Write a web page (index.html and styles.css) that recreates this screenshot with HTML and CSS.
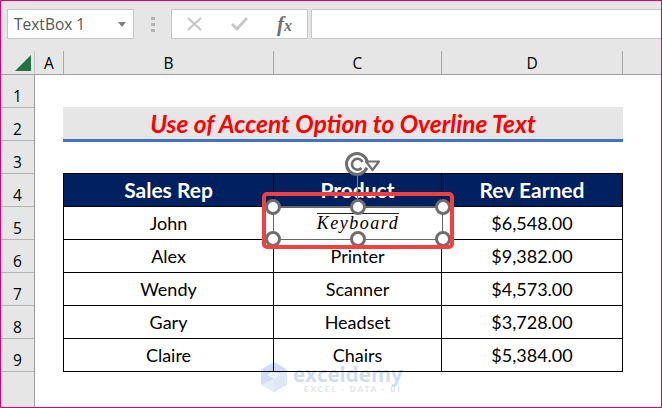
FILE: index.html
```html
<!DOCTYPE html>
<html lang="en">
<head>
  <meta charset="UTF-8" />
  <title>Use of Accent Option to Overline Text</title>
  <link rel="stylesheet" href="styles.css">
</head>
<body>
  <div class="window">

    <!-- Formula bar -->
    <div class="toolbar">
      <div class="name-box">
        <span>TextBox 1</span>
        <svg class="caret" width="8" height="5" viewBox="0 0 8 5"><path d="M0 0h8L4 5z" fill="#7f7f7f"/></svg>
      </div>
      <div class="grip"><i></i><i></i><i></i></div>
      <div class="fx-box">
        <svg width="17" height="14" viewBox="0 0 17 14"><path d="M2 1l13 12M15 1L2 13" stroke="#c6c6c6" stroke-width="2.200" fill="none"/></svg>
        <svg width="17" height="14" viewBox="0 0 17 14"><path d="M1 7l5 5 10-11" stroke="#c6c6c6" stroke-width="2.800" fill="none"/></svg>
        <span class="fx">f<sub>x</sub></span>
      </div>
      <div class="formula-input"></div>
    </div>

    <!-- Column headers -->
    <div class="col-headers">
      <div class="corner"><svg width="16" height="16" viewBox="0 0 16 16"><path d="M16 0v16H0z" fill="#217346"/></svg></div>
      <div class="col col-a">A</div>
      <div class="col col-b">B</div>
      <div class="col col-c">C</div>
      <div class="col col-d">D</div>
      <div class="col col-e"></div>
    </div>

    <div class="sheet">
      <div class="row-headers">
        <div>1</div><div>2</div><div>3</div><div>4</div><div>5</div><div>6</div><div>7</div><div>8</div><div>9</div>
      </div>

      <div class="cells">
        <h1 class="title">Use of Accent Option to Overline Text</h1>

        <div class="watermark">
          <svg width="28" height="31" viewBox="0 0 28 31">
            <path d="M14 0l13 7.500v15L14 30 1 22.500v-15z" fill="#cfdcf5"/>
            <path d="M14 15l13-7.500v15L14 30z" fill="#dde7f8"/>
            <path d="M14 9l7 4-7 4-7-4z" fill="#eef3fc"/>
            <path d="M14 17v13L1 22.500z" fill="#e6edf9"/>
          </svg>
          <div class="wm-text">
            <span class="wm-name">exceldemy</span>
            <span class="wm-sub">EXCEL · DATA · BI</span>
          </div>
        </div>

        <table class="sales">
          <tr><th>Sales Rep</th><th>Product</th><th>Rev Earned</th></tr>
          <tr><td>John</td><td></td><td>$6,548.00</td></tr>
          <tr><td>Alex</td><td>Printer</td><td>$9,382.00</td></tr>
          <tr><td>Wendy</td><td>Scanner</td><td>$4,573.00</td></tr>
          <tr><td>Gary</td><td>Headset</td><td>$3,728.00</td></tr>
          <tr><td>Claire</td><td>Chairs</td><td>$5,384.00</td></tr>
        </table>

        <!-- Selected text box, sits over the table -->
        <div class="rotate-stem"></div>
        <svg class="rotate" width="38" height="28" viewBox="0 0 38 28">
          <circle cx="14" cy="13" r="10.500" fill="#fff" stroke="#6e6e6e" stroke-width="3"/>
          <path d="M19.500 11a5.500 5.500 0 1 0-1 6" fill="none" stroke="#6e6e6e" stroke-width="2.600"/>
          <path d="M18 13l8-3v8z" fill="#fff"/>
          <path d="M23 10.500h13l-6.500 8.500z" fill="#fff" stroke="#6e6e6e" stroke-width="2.200" stroke-linejoin="round"/>
        </svg>
        <div class="textbox">
          <span class="accent">Keyboard</span>
          <i class="handle h-tl"></i><i class="handle h-tc"></i><i class="handle h-tr"></i>
          <i class="handle h-bl"></i><i class="handle h-bc"></i><i class="handle h-br"></i>
        </div>
        <div class="callout"></div>
      </div>
    </div>

  </div>
</body>
</html>
```

FILE: styles.css
```css
* {
  margin: 0;
  padding: 0;
  box-sizing: border-box;
}

html, body {
  width: 662px;
  height: 408px;
  overflow: hidden;
}

body {
  font-family: 'Lato', 'Open Sans', sans-serif;
  color: #000;
  background: #fff;
}

.window {
  width: 662px;
  height: 408px;
  border: 1px solid #e6006e;
  display: flex;
  flex-direction: column;
}

/* Formula bar */
.toolbar {
  height: 49px;
  flex: none;
  background: #e6e6e6;
  padding: 8px 0 0 6px;
  display: flex;
  align-items: flex-start;
}

.name-box {
  width: 127px;
  height: 30px;
  background: #fff;
  border: 1px solid #c6c6c6;
  display: flex;
  align-items: center;
  justify-content: space-between;
  padding: 0 7px 0 6px;
  font-family: 'Open Sans', sans-serif;
  font-size: 15.500px;
  color: #555;
}

.grip {
  width: 37px;
  height: 30px;
  display: flex;
  flex-direction: column;
  align-items: center;
  justify-content: center;
  gap: 3px;
}

.grip i {
  width: 4px;
  height: 3px;
  background: #b4b4b4;
}

.fx-box {
  width: 137px;
  height: 30px;
  background: #fff;
  border: 1px solid #c6c6c6;
  display: flex;
  align-items: center;
  gap: 28px;
  padding-left: 14px;
}

.fx {
  font-family: 'Liberation Serif', serif;
  font-style: italic;
  font-weight: bold;
  font-size: 21px;
  color: #707070;
  margin-left: 1px;
}

.fx sub {
  font-size: 16px;
  vertical-align: baseline;
  line-height: 0;
}

.formula-input {
  flex: 1;
  height: 30px;
  margin-left: 3px;
  background: #fff;
  border: 1px solid #c6c6c6;
  border-right: none;
}

/* Column headers */
.col-headers {
  height: 25px;
  flex: none;
  display: flex;
  background: #e6e6e6;
  border-bottom: 1px solid #a0a0a0;
}

.corner {
  width: 34px;
  margin-top: 1px;
  display: flex;
  justify-content: flex-end;
  align-items: flex-end;
  padding: 0 3px 3px 0;
  border-right: 1px solid #c8c8c8;
}

.col {
  margin-top: 1px;
  line-height: 24px;
  text-align: center;
  border-right: 1px solid #a8a8a8;
  font-family: 'Open Sans', sans-serif;
  font-size: 15.500px;
}

.col-a { width: 29px; }
.col-b { width: 210px; }
.col-c { width: 168px; }
.col-d { width: 181px; }
.col-e { flex: 1; border-right: none; }

/* Sheet */
.sheet {
  flex: 1;
  display: flex;
  min-height: 0;
}

.row-headers {
  width: 34px;
  flex: none;
  background: #e6e6e6;
  border-right: 1px solid #a0a0a0;
}

.row-headers div {
  height: 33px;
  border-bottom: 1px solid #b4b4b4;
  font-family: 'Open Sans', sans-serif;
  font-size: 15.500px;
  text-align: center;
  padding-top: 11px;
  line-height: 20px;
}

.cells {
  position: relative;
  flex: 1;
  padding: 32px 0 0 28px;
}

.title {
  width: 560px;
  height: 35px;
  background: #e6e6e6;
  border-bottom: 3px solid #4472c4;
  color: #ff0000;
  font-size: 24.500px;
  font-style: italic;
  font-weight: 700;
  text-align: center;
  line-height: 33px;
}

.sales {
  position: relative;
  z-index: 1;
  margin-top: 31px;
  width: 560px;
  border-collapse: collapse;
  table-layout: fixed;
  font-size: 18px;
}

.sales th, .sales td {
  height: 33px;
  border: 1px solid #000;
  text-align: center;
  padding: 0;
}

.sales th:nth-child(1) { width: 210px; }
.sales th:nth-child(2) { width: 168px; }

.sales th {
  background: #002060;
  color: #fff;
  font-size: 21px;
  font-weight: 700;
  padding-bottom: 2px;
}

/* Text box overlay */
.textbox {
  position: absolute;
  z-index: 2;
  left: 238px;
  top: 131px;
  width: 170px;
  height: 34px;
  border: 1px solid #666;
  border-top-width: 2px;
  text-align: center;
  background: #fff;
}

.accent {
  display: inline-block;
  margin-top: 5px;
  border-top: 1px solid #222;
  font-family: 'Liberation Serif', serif;
  font-style: italic;
  font-size: 18px;
  letter-spacing: 1.500px;
  line-height: 19px;
}

.handle {
  position: absolute;
  width: 16px;
  height: 16px;
  border-radius: 50%;
  background: #fff;
  border: 3px solid #6e6e6e;
}

.h-tl { left: -9px; top: -9px; }
.h-tc { left: 76px; top: -9px; }
.h-tr { right: -9px; top: -9px; }
.h-bl { left: -9px; bottom: -8px; }
.h-bc { left: 76px; bottom: -8px; }
.h-br { right: -9px; bottom: -8px; }

.rotate {
  position: absolute;
  z-index: 2;
  left: 308px;
  top: 76px;
}

.rotate-stem {
  position: absolute;
  z-index: 2;
  left: 322px;
  top: 100px;
  width: 1px;
  height: 30px;
  background: #888;
}

.callout {
  position: absolute;
  z-index: 2;
  left: 227px;
  top: 117px;
  width: 192px;
  height: 57px;
  border: 4px solid #f04040;
  border-radius: 5px;
}

.watermark {
  position: absolute;
  left: 225px;
  top: 287px;
  display: flex;
  gap: 5px;
}

.wm-text {
  display: flex;
  flex-direction: column;
  padding-top: 4px;
}

.wm-name {
  font-family: 'Open Sans', sans-serif;
  font-size: 20.500px;
  font-weight: 700;
  line-height: 16px;
  color: #cfdcf5;
}

.wm-sub {
  margin-top: 3px;
  font-size: 8px;
  font-weight: 700;
  letter-spacing: 2px;
  color: #dfe3ea;
  line-height: 9px;
  padding-left: 11px;
}
```
